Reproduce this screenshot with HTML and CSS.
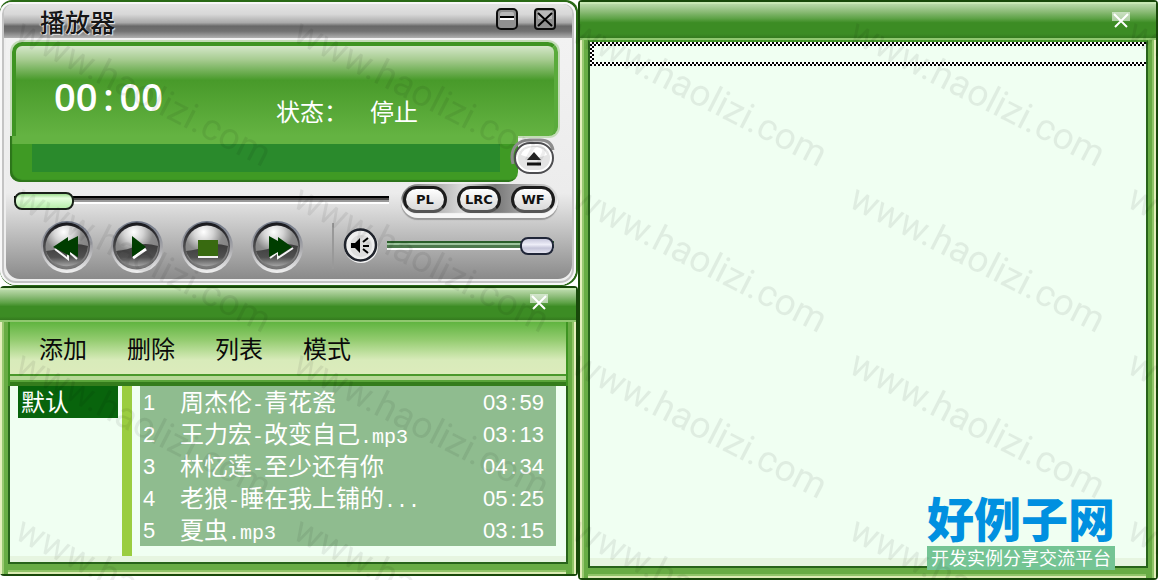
FILE: index.html
```html
<!DOCTYPE html>
<html lang="zh-CN">
<head>
<meta charset="utf-8">
<title>播放器</title>
<link rel="stylesheet" href="styles.css">
</head>
<body>
<svg class="defs" width="0" height="0" aria-hidden="true">
  <defs>
    <linearGradient id="rim" x1="0" y1="0" x2="0" y2="1">
      <stop offset="0" stop-color="#6d7585"/><stop offset=".5" stop-color="#a4a4a8"/><stop offset="1" stop-color="#f0f0f0"/>
    </linearGradient>
    <linearGradient id="ring" x1="0" y1="0" x2="0" y2="1">
      <stop offset="0" stop-color="#17171b"/><stop offset=".5" stop-color="#4c4c4e"/><stop offset="1" stop-color="#777"/>
    </linearGradient>
    <radialGradient id="ball" cx=".42" cy=".15" r=".9">
      <stop offset="0" stop-color="#fff"/><stop offset=".25" stop-color="#d4d4d4"/><stop offset=".5" stop-color="#8c8c8c"/>
      <stop offset="1" stop-color="#767676"/>
    </radialGradient>
    <linearGradient id="bowl" x1="0" y1="0" x2="0" y2="1">
      <stop offset="0" stop-color="#3c3c3c"/><stop offset=".6" stop-color="#505050"/><stop offset="1" stop-color="#a4a4a4"/>
    </linearGradient>
    <symbol id="knob" viewBox="0 0 54 54">
      <circle cx="27" cy="27" r="26" fill="url(#rim)"/>
      <circle cx="26.500" cy="26" r="23.500" fill="url(#ring)"/>
      <circle cx="27" cy="27" r="21.500" fill="url(#ball)"/>
      <path d="M6 31q12-1 20-5t22 0a21.500 21.500 0 0 1-42 5z" fill="url(#bowl)"/>
    </symbol>
  </defs>
</svg>
<main class="desktop">
  <div class="left">
    <section class="player">
      <div class="shell">
        <header class="titlebar">
          <h1>播放器</h1>
          <button class="winbtn" aria-label="最小化"><svg width="22" height="22" viewBox="0 0 22 22"><rect x="1" y="1" width="20" height="20" rx="4" fill="#909090" stroke="#0c0c0c" stroke-width="2"/><path d="M4 11V6q0-2 2-2h10q2 0 2 2v5z" fill="#b8b8b8"/><path d="M4 9h14" stroke="#000" stroke-width="2"/><path d="M4 11h14" stroke="#fff" stroke-width="2"/></svg></button>
          <button class="winbtn" aria-label="关闭"><svg width="22" height="22" viewBox="0 0 22 22"><rect x="1" y="1" width="20" height="20" rx="3" fill="#909090" stroke="#0c0c0c" stroke-width="2"/><path d="M4 3h14v8H4z" fill="#b8b8b8"/><path d="M4 5l14 13M18 5L4 18" stroke="#000" stroke-width="2"/></svg></button>
        </header>
        <div class="panel">
          <div class="display">
            <div class="screen">
              <div class="clock">00<span>:</span>00</div>
              <div class="status"><span>状态：</span><span>停止</span></div>
            </div>
            <div class="ledge"><div class="scroller"></div></div>
            <button class="eject" aria-label="打开"><svg width="46" height="40" viewBox="0 0 46 40"><path d="M3 26C-1 10 8 2 20 2h10c8 0 12 4 13 10" fill="none" stroke="#8d8d8d" stroke-width="3"/><rect x="5" y="5" width="38" height="30" rx="15" fill="#fff" stroke="#4d4d50" stroke-width="2"/><rect x="8" y="8" width="32" height="24" rx="12" fill="#e4e4e4"/><path d="M11 17q2-7 12-8h4q8 1 10 8-13 5-26 0z" fill="#fff"/><path d="M17 22h14l-7-8z" fill="#222"/><path d="M17 26h14" stroke="#111" stroke-width="3"/></svg></button>
          </div>
          <div class="seekrow">
            <input class="seek" type="range" min="0" max="100" value="0" aria-label="进度">
            <div class="pills"><button>PL</button><button>LRC</button><button>WF</button></div>
          </div>
          <div class="controls">
            <div class="transport">
              <button aria-label="上一首"><svg width="54" height="54"><use href="#knob"/><path d="M15 29l13 10V31l9 8" stroke="#f4f4f4" stroke-width="2" fill="none"/><path d="M13 27l15-10v4l10-5v21l-8-5v4z" fill="#003d00"/></svg></button>
              <button aria-label="播放"><svg width="54" height="54"><use href="#knob"/><path d="M23 38l13-9" stroke="#fff" stroke-width="3"/><path d="M22 16l14 11-14 10z" fill="#003d00"/></svg></button>
              <button aria-label="停止"><svg width="54" height="54"><use href="#knob"/><path d="M18 20h20v16H18z" fill="#386a10"/><path d="M18 37h20" stroke="#f2f2f2" stroke-width="2"/></svg></button>
              <button aria-label="下一首"><svg width="54" height="54"><use href="#knob"/><path d="M20 38l8-6v6l15-10" stroke="#f4f4f4" stroke-width="2" fill="none"/><path d="M19 16l9 5v-4l14 10-14 9v-4l-9 5z" fill="#003d00"/></svg></button>
            </div>
            <div class="volume">
              <button aria-label="静音"><svg width="36" height="36" viewBox="0 0 36 36"><circle cx="18" cy="18" r="17" fill="#f5f5f5"/><circle cx="17.500" cy="17" r="15.500" fill="#efefef" stroke="#20242c" stroke-width="2.500"/><circle cx="18" cy="18" r="11" fill="#dedede"/><path d="M8 15h4l5-5v15l-5-5H8z" fill="#000"/><path d="M20 14l5-4M20 18h6M20 21l5 4" stroke="#000" stroke-width="2"/></svg></button>
              <input class="level" type="range" min="0" max="100" value="100" aria-label="音量">
            </div>
          </div>
        </div>
      </div>
    </section>
    <section class="window playlist">
      <header class="caption"><button aria-label="关闭"><svg width="18" height="16" viewBox="0 0 18 16"><path d="M0 0h18v9H0z" fill="#fff" opacity=".55"/><path d="M2 2l13 13M16 2L3 15" stroke="#fff" stroke-width="2"/></svg></button></header>
      <div class="frame">
        <nav class="menu"><button>添加</button><button>删除</button><button>列表</button><button>模式</button></nav>
        <div class="lists">
          <ul class="groups"><li>默认</li></ul>
          <div class="divider"></div>
          <table class="songs">
            <tr><td class="no">1</td><td>周杰伦<i>-</i>青花瓷</td><td class="time">03<span>:</span>59</td></tr>
            <tr><td class="no">2</td><td>王力宏<i>-</i>改变自己<i>.mp3</i></td><td class="time">03<span>:</span>13</td></tr>
            <tr><td class="no">3</td><td>林忆莲<i>-</i>至少还有你</td><td class="time">04<span>:</span>34</td></tr>
            <tr><td class="no">4</td><td>老狼<i>-</i>睡在我上铺的<i>...</i></td><td class="time">05<span>:</span>25</td></tr>
            <tr><td class="no">5</td><td>夏虫<i>.mp3</i></td><td class="time">03<span>:</span>15</td></tr>
          </table>
        </div>
      </div>
    </section>
  </div>
  <section class="window lyrics">
    <header class="caption"><button aria-label="关闭"><svg width="18" height="16" viewBox="0 0 18 16"><path d="M0 0h18v9H0z" fill="#fff" opacity=".55"/><path d="M2 2l13 13M16 2L3 15" stroke="#fff" stroke-width="2"/></svg></button></header>
    <div class="frame"><div class="page"><div class="focusline"></div></div></div>
    <div class="brand"><strong>好例子网</strong><span>开发实例分享交流平台</span></div>
  </section>
  <svg class="watermark" width="100%" height="100%" aria-hidden="true">
    <defs><pattern id="mark" width="278" height="166" patternUnits="userSpaceOnUse" x="6" y="6"><text x="0" y="0" transform="translate(7 34) rotate(27)">www.haolizi.com</text></pattern></defs>
    <rect y="6" width="100%" height="100%" fill="url(#mark)"/>
  </svg>
</main>
</body>
</html>
```
FILE: styles.css
```css
* { box-sizing: border-box; }
body { margin: 0; background: #fff; font-family: "Noto Sans CJK SC", sans-serif; }
button { border: 0; padding: 0; background: none; color: inherit; font: inherit; }
svg { display: block; }
h1, ul { margin: 0; padding: 0; list-style: none; }
.defs { position: absolute; }

.desktop { position: relative; display: grid; grid-template-columns: 578fr 580fr; min-height: 100vh; overflow: hidden; }
.left { display: flex; flex-direction: column; padding-bottom: 4px; }

/* Player */
.player { background: #2a6a16; padding: 2px 2px 1px 0; border-radius: 12px 12px 16px 16px; }
.shell { padding: 2px 4px 6px; border-radius: 12px 12px 16px 16px; overflow: hidden; background: #eee; box-shadow: inset 0 0 0 2px #f8f8f8, inset 0 0 0 4px #c4c4c4; }
.titlebar { display: flex; align-items: center; gap: 16px; height: 34px; padding: 0 16px 4px 36px; border-radius: 9px 9px 0 0; background: linear-gradient(#e4e4e4, #d8d8d8 30%, #aaa 55%, #686868 65%, #727272 80%, #b0b0b0); }
.titlebar h1 { flex: 1; padding-top: 4px; font-size: 25px; font-weight: 500; line-height: 30px; color: #161616; text-shadow: 1px 1px 1px #eee, -1px 0 1px #ddd; }
.panel { margin: 0 0 0 2px; padding: 4px 14px 0 4px; border-radius: 0 0 14px 14px; background: linear-gradient(#f2f2f2 0, #ececec 155px, #dcdcdc 170px, #8a8a8a 100%); }
.display { position: relative; height: 140px; }
.screen { display: flex; justify-content: space-between; height: 94px; margin-left: 2px; padding: 27px 136px 0 38px; border: 4px solid #3e9422; border-color: #3e9422 #5aab3c #5aab3c #3e9422; border-bottom: 0; border-radius: 10px 10px 9px 0; background: linear-gradient(#d4e7c9, #a7cc91 15%, #489a2a 38%, #64b342); box-shadow: 0 0 0 2px #c4dcb8; color: #fff; }
.clock { font: 600 38px/46px "Open Sans", "Noto Sans", sans-serif; }
.clock span { display: inline-block; width: 22px; text-align: center; }
.status { display: flex; gap: 22px; padding-top: 20px; font-size: 24px; line-height: 36px; }
.ledge { position: relative; height: 46px; margin: 0 40px 0 0; padding: 8px 18px 10px 22px; border-radius: 0 0 10px 10px; background: linear-gradient(#64b342 8px, #3f9a24 8px); box-shadow: inset 2px -2px 1px #2c741a; }
.scroller { height: 28px; background: #2a8a2c; }
.eject { position: absolute; right: 2px; bottom: 4px; }
.seekrow { display: flex; align-items: center; gap: 12px; height: 38px; padding-left: 4px; }
.pills { display: flex; gap: 10px; padding: 2px 3px 5px 2px; border-radius: 17px; background: linear-gradient(90deg, #777, #ddd 40%, #777 60%, #ddd); box-shadow: inset 0 -5px 1px #f6f6f6, 0 2px 1px #999; }
.pills button { width: 44px; height: 27px; border: 3px solid #1c1c1c; border-bottom-color: #555; border-radius: 14px; background: linear-gradient(#fff, #d8d8d8); color: #111; font: bold 13px/18px "DejaVu Sans", sans-serif; }
input[type=range] { appearance: none; min-width: 0; height: 18px; margin: 0; background: none; }
.seek { flex: 1; }
.seek::-webkit-slider-runnable-track { height: 18px; background: linear-gradient(transparent 4px, #000 4px 6px, #4a4848 6px 8px, #999 8px 10px, #fff 10px 12px, transparent 12px); }
.seek::-webkit-slider-thumb { appearance: none; width: 60px; height: 18px; border: 2px solid #182018; border-radius: 8px; background: linear-gradient(#9edb90, #e6ffdf 30%, #b8eeab); }
.controls { display: flex; height: 59px; padding-left: 30px; }
.transport { display: flex; align-items: flex-start; gap: 16px; padding-right: 28px; }
.volume { flex: 1; display: flex; align-items: center; gap: 8px; height: 52px; padding: 0 4px 0 11px; background: linear-gradient(#999, #999) left / 2px 46px no-repeat; }
.level { flex: 1; }
.level::-webkit-slider-runnable-track { height: 18px; background: linear-gradient(transparent 4px, #2b5f2b 4px 6px, #9dc49d 6px 8px, #4d794d 8px 11px, #fff 11px 13px, transparent 13px); }
.level::-webkit-slider-thumb { appearance: none; width: 34px; height: 18px; border: 2px solid #202638; border-radius: 8px; background: linear-gradient(#c8c8dc, #eeeef8 40%, #c4c4d8 65%, #e4e4f0); }

/* Green windows */
.window { display: flex; flex-direction: column; padding: 2px; border-radius: 4px; background: #18480a; }
.caption { display: flex; justify-content: flex-end; align-items: flex-start; height: 36px; padding: 8px 26px 0 0; border-top: 2px solid #c8e8b4; background: linear-gradient(#b8d8a8, #8cbc78 22%, #5fa348 42%, #3c8c24 55%, #3c8c24 88%, #347a1e); }
.frame { flex: 1; display: flex; flex-direction: column; padding: 0 8px 10px; border-top: 2px solid #90c870; background:
  linear-gradient(90deg, #e4eebc 2px, #98c870 2px 4px, #68ac44 4px 8px, transparent 8px) no-repeat,
  linear-gradient(270deg, #e4eebc 2px, #90c468 2px 4px, #68ac44 4px 10px, transparent 10px) no-repeat,
  linear-gradient(0deg, #dcebb4 2px, #90c468 2px 4px, #68ac44 4px 10px) no-repeat; }
.playlist { flex: 1; padding: 2px 2px 2px 0; }
.playlist .caption { height: 32px; padding: 4px 28px 0 0; }
.menu { display: flex; gap: 40px; height: 64px; padding: 8px 30px 0 29px; border-left: 2px solid #3e9422; border-right: 2px solid #3e9422; background: linear-gradient(#60b440, #94cc70 18px, #d8ebba 38px, #dcebbc 52px, #4a982c 52px 54px, #b8d898 54px 58px, #5aa43a 58px 60px, #347c1c 60px); }
.menu button { height: 36px; font-size: 24px; line-height: 36px; color: #0a0a0a; }
.lists { flex: 1; display: grid; grid-template-columns: 100px 10px 1fr; column-gap: 4px; padding: 0 10px 6px 8px; border: 2px solid #28641a; border-top: 0; background: linear-gradient(0deg, #e6f5e0 6px, #f0fff2 6px); color: #fff; font-size: 24px; line-height: 30px; }
.groups li { height: 32px; padding-left: 3px; background: #08640c; }
.divider { background: #9acd40; }
.songs { justify-self: stretch; align-self: start; margin-left: 4px; border-collapse: collapse; background: #8fbc8f; }
.songs td { height: 32px; padding: 0 0 2px; white-space: nowrap; line-height: 30px; }
.songs i { font: 20px/20px "Liberation Mono", monospace; }
.songs .no { width: 40px; padding: 2px 0 0 3px; font: 22px/30px "Liberation Sans", sans-serif; }
.songs .time { width: 73px; padding: 2px 0 0; font: 22px/30px "Liberation Sans", sans-serif; }
.time span { display: inline-block; width: 12px; text-align: center; }

.lyrics { position: relative; }
.page { flex: 1; border: 2px solid #28641a; border-top-color: #44982a; background: linear-gradient(0deg, #e6f5e0 8px, #f0fff2 8px); }
.focusline { height: 24px; padding: 4px 0 4px 4px; background: conic-gradient(#000 25%, #fff 0 50%, #000 0 75%, #fff 0) 0 0 / 4px 4px; }
.focusline::before { content: ""; display: block; height: 100%; background: #f0fff2; }
.brand { position: absolute; right: 43px; bottom: 10px; width: 188px; text-align: center; }
.brand strong { display: block; padding-bottom: 3px; color: #0090e0; font-size: 47px; font-weight: 900; line-height: 52px; }
.brand span { display: block; height: 24px; background: #74c494; color: #fff; font-size: 18px; line-height: 22px; }

.watermark { position: absolute; inset: 0; pointer-events: none; }
.watermark text { font: 37px Roboto, sans-serif; fill: #000; fill-opacity: .07; }
```
